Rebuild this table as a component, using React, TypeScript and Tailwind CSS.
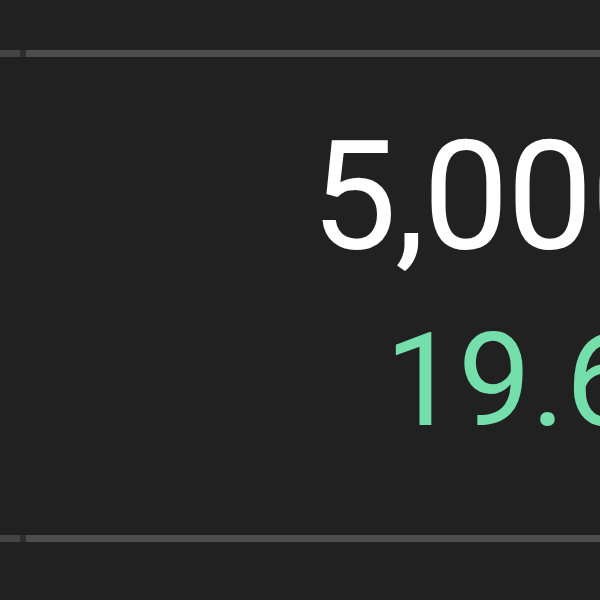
export default function App() {
  return (
    <div className="flex h-[600px] w-[600px] flex-col overflow-hidden bg-[#212121] font-['Roboto',sans-serif]">
      <div className="h-[50px]" />
      {/* top rule */}
      <div className="flex h-[7px] items-stretch">
        <div className="w-[20px] bg-[#444]" />
        <div className="w-[6px] bg-[#2e2e2e]" />
        <div className="flex-1 bg-[#4d4d4d]" />
      </div>

      <div className="flex h-[478px] flex-col overflow-hidden">
        <div className="mt-[63px] whitespace-nowrap pl-[311px] text-[153px] leading-none tracking-[-2px] text-white">
          5,000
        </div>
        <div className="mt-[43px] whitespace-nowrap pl-[385px] text-[130px] leading-none text-[#74dfaa]">
          19.6
        </div>
      </div>

      {/* bottom rule */}
      <div className="flex h-[7px] items-stretch">
        <div className="w-[20px] bg-[#444]" />
        <div className="w-[6px] bg-[#2e2e2e]" />
        <div className="flex-1 bg-[#4d4d4d]" />
      </div>
    </div>
  )
}
